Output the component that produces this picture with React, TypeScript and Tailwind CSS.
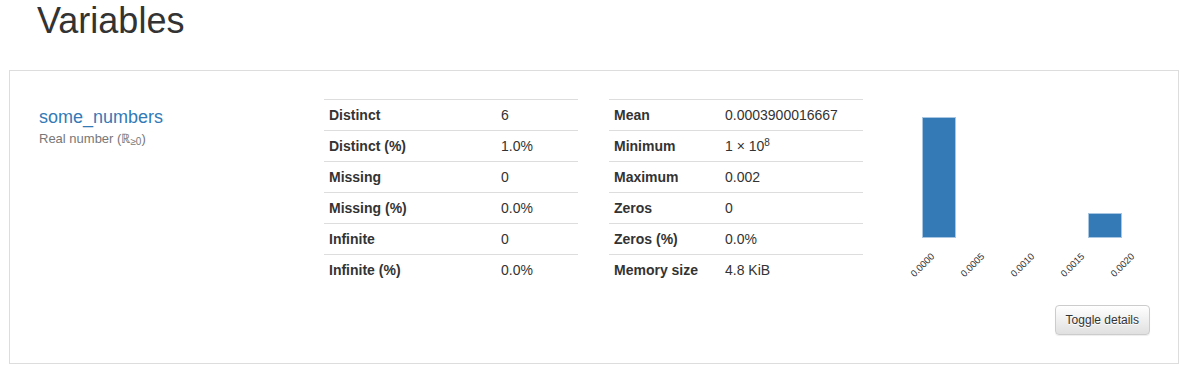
const font = { fontFamily: '"Liberation Sans", Arial, Helvetica, sans-serif' };

const left = [
  ['Distinct', '6'],
  ['Distinct (%)', '1.0%'],
  ['Missing', '0'],
  ['Missing (%)', '0.0%'],
  ['Infinite', '0'],
  ['Infinite (%)', '0.0%'],
];

const right: [string, React.ReactNode][] = [
  ['Mean', '0.0003900016667'],
  [
    'Minimum',
    <>
      1 × 10<sup className="text-[10px] relative -top-[5px] align-baseline">8</sup>
    </>,
  ],
  ['Maximum', '0.002'],
  ['Zeros', '0'],
  ['Zeros (%)', '0.0%'],
  ['Memory size', '4.8 KiB'],
];

const StatTable = ({
  rows,
  labelWidth,
  valueWidth,
  className = '',
}: {
  rows: [string, React.ReactNode][];
  labelWidth: string;
  valueWidth: string;
  className?: string;
}) => (
  <table className={`border-collapse text-[14px] leading-[20px] text-[#333] ${className}`}>
    <tbody>
      {rows.map(([label, value]) => (
        <tr key={label} className="border-t border-[#ddd]">
          <th className={`${labelWidth} p-[5px] text-left font-bold`}>{label}</th>
          <td className={`${valueWidth} p-[5px]`}>{value}</td>
        </tr>
      ))}
    </tbody>
  </table>
);

const Histogram = () => {
  const ticks = ['0.0000', '0.0005', '0.0010', '0.0015', '0.0020'];
  return (
    <svg width="255" height="186" viewBox="0 0 255 186">
      <rect x="28.5" y="18.5" width="33" height="120" fill="#337ab7" stroke="#a8c6e2" strokeWidth="1" />
      <rect x="194.5" y="114.5" width="33" height="24" fill="#337ab7" stroke="#a8c6e2" strokeWidth="1" />
      {ticks.map((t, i) => {
        const x = 41 + i * 50;
        return (
          <text
            key={t}
            x={x}
            y={158}
            fontSize="9.5"
            fill="#333"
            textAnchor="end"
            transform={`rotate(-45 ${x} 158)`}
            style={font}
          >
            {t}
          </text>
        );
      })}
    </svg>
  );
};

export default function App() {
  return (
    <div className="bg-white w-[1194px] h-[377px] overflow-hidden text-[#333]" style={font}>
      <h1 className="pl-[37px] pt-[1px] text-[36px] leading-[39.6px] font-medium text-[#333]">
        Variables
      </h1>
      <div className="ml-[9px] mt-[29px] w-[1170px] border border-[#ddd] pt-[28px] pb-[28px] flex flex-col">
        <div className="flex">
          <div className="w-[314px] pl-[29px] pt-[6px]">
            <div className="text-[18px] leading-[24px] text-[#337ab7]">some_numbers</div>
            <div className="text-[13px] leading-[20px] text-[#777]">
              Real number (ℝ<sub className="text-[10px] align-baseline relative top-[2px]">≥0</sub>)
            </div>
          </div>
          <StatTable rows={left as [string, React.ReactNode][]} labelWidth="w-[172px]" valueWidth="w-[82px]" />
          <StatTable rows={right} labelWidth="w-[111px]" valueWidth="w-[143px]" className="ml-[31px]" />
          <div className="ml-[31px]">
            <Histogram />
          </div>
        </div>
        <div className="flex justify-end pr-[28px] mt-[20px]">
          <button className="h-[30px] px-[10px] text-[12px] leading-[18px] text-[#333] rounded-[4px] border border-[#ccc] bg-gradient-to-b from-white to-[#e0e0e0] shadow-[0_1px_1px_rgba(0,0,0,0.075)] [text-shadow:0_1px_0_#fff]">
            Toggle details
          </button>
        </div>
      </div>
    </div>
  );
}
